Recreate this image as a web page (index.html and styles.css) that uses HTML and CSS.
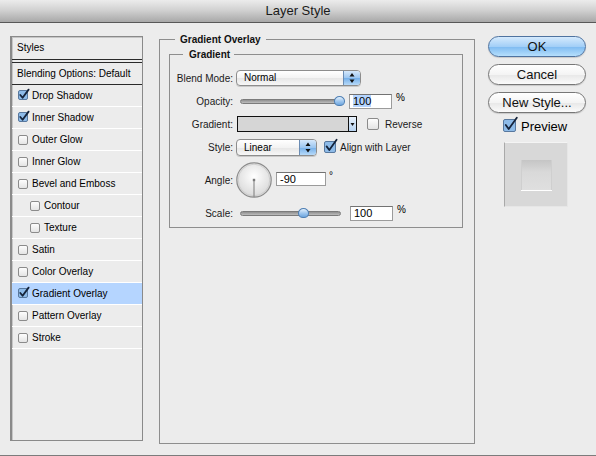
FILE: index.html
```html
<!DOCTYPE html>
<html lang="en">
<head>
    <meta charset="UTF-8">
    <title>Layer Style</title>
    <link rel="stylesheet" href="styles.css">
</head>
<body>
<div class="window">
    <div class="titlebar">Layer Style</div>

    <div class="dialog">
        <!-- left list -->
        <div class="styles">
            <div class="styles-head">Styles</div>
            <div class="styles-blend">Blending Options: Default</div>
            <ul class="fx-list">
                <li><span class="cb checked"><svg viewBox="0 0 12 12"><rect x="0.5" y="1.5" width="9" height="9" rx="1.5" class="box"/><path d="M2.3 6 L4.6 8.8 L10.6 0.6" class="tick"/></svg></span>Drop Shadow</li>
                <li><span class="cb checked"><svg viewBox="0 0 12 12"><rect x="0.5" y="1.5" width="9" height="9" rx="1.5" class="box"/><path d="M2.3 6 L4.6 8.8 L10.6 0.6" class="tick"/></svg></span>Inner Shadow</li>
                <li><span class="cb"></span>Outer Glow</li>
                <li><span class="cb"></span>Inner Glow</li>
                <li><span class="cb"></span>Bevel and Emboss</li>
                <li class="sub"><span class="cb"></span>Contour</li>
                <li class="sub"><span class="cb"></span>Texture</li>
                <li><span class="cb"></span>Satin</li>
                <li><span class="cb"></span>Color Overlay</li>
                <li class="active"><span class="cb checked"><svg viewBox="0 0 12 12"><rect x="0.5" y="1.5" width="9" height="9" rx="1.5" class="box"/><path d="M2.3 6 L4.6 8.8 L10.6 0.6" class="tick"/></svg></span>Gradient Overlay</li>
                <li><span class="cb"></span>Pattern Overlay</li>
                <li><span class="cb"></span>Stroke</li>
            </ul>
        </div>

        <!-- center panel -->
        <div class="main">
            <fieldset class="group outer">
                <legend>Gradient Overlay</legend>
                <fieldset class="group inner">
                    <legend>Gradient</legend>
                    <div class="form">
                        <label>Blend Mode:</label>
                        <div class="ctl">
                            <div class="popup wide"><span>Normal</span><span class="stepper"><svg viewBox="0 0 16 14"><path d="M5.5 5.5 L8 2 L10.5 5.5 Z M5.5 8.5 L8 12 L10.5 8.5 Z"/></svg></span></div>
                        </div>

                        <label>Opacity:</label>
                        <div class="ctl">
                            <div class="track op"><span class="thumb"></span></div>
                            <div class="field num"><span class="sel">100</span></div>
                            <span class="unit">%</span>
                        </div>

                        <label>Gradient:</label>
                        <div class="ctl">
                            <div class="grad"><span class="swatch"></span><span class="grad-arrow"><svg viewBox="0 0 7 14"><path d="M1.5 6 L5.5 6 L3.5 9 Z"/></svg></span></div>
                            <span class="cb lg gap-rev"></span>
                            <span class="opt">Reverse</span>
                        </div>

                        <label>Style:</label>
                        <div class="ctl">
                            <div class="popup short"><span>Linear</span><span class="stepper"><svg viewBox="0 0 16 15"><path d="M5.5 6 L8 2.5 L10.5 6 Z M5.5 9 L8 12.5 L10.5 9 Z"/></svg></span></div>
                            <span class="cb lg checked gap-align"><svg viewBox="0 0 14 14"><rect x="0.5" y="2.5" width="11" height="11" rx="1.5" class="box"/><path d="M2.6 7.4 L5.3 11 L12.6 0.8" class="tick"/></svg></span>
                            <span class="opt">Align with Layer</span>
                        </div>

                        <label>Angle:</label>
                        <div class="ctl">
                            <svg class="dial" viewBox="0 0 36 36">
                                <defs>
                                    <radialGradient id="dialfill" cx="50%" cy="40%" r="60%">
                                        <stop offset="0" stop-color="#ffffff"/>
                                        <stop offset="1" stop-color="#d8d8d8"/>
                                    </radialGradient>
                                </defs>
                                <circle cx="18" cy="18" r="17.2" fill="url(#dialfill)" stroke="#8c8c8c" stroke-width="1.2"/>
                                <circle cx="18" cy="18" r="15.8" fill="none" stroke="#c9c9c9" stroke-width="0.8"/>
                                <line x1="18" y1="18" x2="18" y2="35" stroke="#7a7a7a" stroke-width="1"/>
                                <rect x="16.8" y="16.8" width="2.4" height="2.4" fill="#7a7a7a"/>
                            </svg>
                            <div class="field angle">-90</div>
                            <span class="unit deg">°</span>
                        </div>

                        <label>Scale:</label>
                        <div class="ctl">
                            <div class="track sc"><span class="thumb"></span></div>
                            <div class="field num">100</div>
                            <span class="unit">%</span>
                        </div>
                    </div>
                </fieldset>
            </fieldset>
        </div>

        <!-- right column -->
        <div class="side">
            <button class="btn default">OK</button>
            <button class="btn">Cancel</button>
            <button class="btn">New Style...</button>
            <div class="preview-row">
                <span class="cb big checked"><svg viewBox="0 0 15 15"><rect x="0.5" y="2.5" width="12" height="12" rx="1.5" class="box"/><path d="M2.8 8 L5.7 12 L13.8 0.8" class="tick"/></svg></span>
                <span>Preview</span>
            </div>
            <div class="preview">
                <div class="preview-square"></div>
            </div>
        </div>
    </div>
</div>
</body>
</html>
```

FILE: styles.css
```css
*{
    box-sizing: border-box;
}
body{
    margin: 0;
    padding: 0;
    background-color: #ececec;
    font-family: "Liberation Sans", Arial, sans-serif;
    font-size: 10px;
    color: #000;
}
.window{
    width: 596px;
    height: 456px;
    border-bottom: 1px solid #7c7c7c;
    background-color: #ececec;
}
.titlebar{
    height: 23px;
    line-height: 22px;
    text-align: center;
    font-size: 13px;
    color: #1a1a1a;
    background: linear-gradient(#ececec, #d2d2d2 45%, #a8a8a8);
    border-bottom: 1px solid #585858;
}
.dialog{
    display: flex;
    align-items: flex-start;
    padding: 10px 0 0 10px;
}

/* styles list */
.styles{
    margin-top: 3px;
    width: 133px;
    height: 405px;
    border: 1px solid #8a8a8a;
    border-left-width: 2px;
    box-shadow: inset 1px 1px 0 #c6c6c6;
    background-color: #ececec;
}
.styles-head{
    height: 23px;
    line-height: 22px;
    padding-left: 5px;
    border-bottom: 1px solid #2a2a2a;
}
.styles-blend{
    margin-top: 2px;
    height: 23px;
    line-height: 21px;
    padding-left: 5px;
    border-top: 1px solid #2a2a2a;
    border-bottom: 1px solid #2a2a2a;
}
.fx-list{
    list-style: none;
    margin: 0;
    padding: 0;
}
.fx-list li{
    display: flex;
    align-items: center;
    height: 22px;
    padding-left: 6px;
    border-bottom: 1px solid #ffffff;
}
.fx-list li.sub{
    padding-left: 18px;
}
.fx-list li.active{
    background-color: #b5d5ff;
}

/* checkboxes */
.cb{
    display: inline-block;
    flex: none;
    width: 10px;
    height: 10px;
    margin-right: 4px;
    border: 1px solid #8b8b8b;
    border-radius: 2px;
    background: linear-gradient(#fdfdfd, #e4e4e4);
}
.cb.checked{
    border: none;
    background: none;
    width: 12px;
    height: 12px;
    margin-top: -2px;
    margin-right: 2px;
}
.cb svg{
    display: block;
    width: 100%;
    height: 100%;
    overflow: visible;
}
.cb .box{
    fill: #8ebbe8;
    stroke: #58789e;
    stroke-width: 1;
}
.cb .tick{
    fill: none;
    stroke: #15233a;
    stroke-width: 1.8;
    stroke-linecap: round;
    stroke-linejoin: round;
}
.cb.lg{
    width: 12px;
    height: 12px;
}
.cb.lg.checked{
    width: 14px;
    height: 14px;
    margin-top: -3px;
}

/* center groups */
.main{
    margin-left: 16px;
    width: 316px;
}
.group{
    margin: 0;
    min-inline-size: 0;
    border: 1px solid #8e8e8e;
}
.group legend{
    font-weight: bold;
    line-height: 13px;
    color: #111;
}
.outer{
    height: 411px;
    padding: 2px 11px 0 9px;
}
.outer > legend{
    margin-left: 6px;
    padding: 0 5px;
}
.inner{
    width: 294px;
    padding: 9px 0 6px 4px;
}
.inner > legend{
    margin-left: 9px;
    padding: 0 4px 0 6px;
}
.form{
    display: grid;
    grid-template-columns: 59px 1fr;
    grid-template-rows: 16px 16px 16px 16px 36px 16px;
    column-gap: 3px;
    row-gap: 7px;
}
.form label{
    text-align: right;
    align-self: center;
    white-space: nowrap;
    color: #1a1a1a;
}
.ctl{
    display: flex;
    align-items: center;
}

/* popup menus */
.popup{
    display: flex;
    height: 16px;
    border: 1px solid #8d8d8d;
    border-radius: 4px;
    background: linear-gradient(#ffffff, #f3f3f3 50%, #e6e6e6 51%, #f7f7f7);
    box-shadow: 0 1px 0 #c9c9c9;
    overflow: hidden;
}
.popup span:first-child{
    flex: 1;
    padding-left: 7px;
    line-height: 14px;
}
.popup.wide{
    width: 125px;
}
.popup.short{
    width: 81px;
    height: 17px;
}
.popup.short span:first-child{
    line-height: 15px;
}
.stepper{
    width: 17px;
    border-left: 1px solid #6b8cb3;
    background: linear-gradient(#d5e8fb, #9cc6f0 50%, #74aee8 51%, #b7daf9);
}
.stepper svg{
    display: block;
    width: 100%;
    height: 100%;
    fill: #111;
}

/* sliders */
.track{
    position: relative;
    height: 5px;
    margin-left: 4px;
    border-radius: 3px;
    border: 1px solid #7b7b7b;
    background: linear-gradient(#8f8f8f, #bdbdbd);
}
.track.op{
    width: 100px;
}
.track.sc{
    width: 101px;
}
.thumb{
    position: absolute;
    top: -4px;
    width: 11px;
    height: 10px;
    border-radius: 50% 50% 45% 45%;
    border: 1px solid #4e7fb4;
    background: linear-gradient(#e3f0fc, #9cc5ee 55%, #6ea6de);
}
.track.op .thumb{
    left: 93px;
}
.track.sc .thumb{
    left: 57px;
}

/* text fields */
.field{
    height: 15px;
    line-height: 13px;
    padding-left: 3px;
    background-color: #fff;
    border: 1px solid #9b9b9b;
    border-top-color: #727272;
    font-size: 11px;
}
.field.num{
    width: 43px;
    margin-left: 9px;
}
.field .sel{
    background-color: #b5d5ff;
}
.field.angle{
    width: 50px;
    height: 14px;
    margin-left: 4px;
    margin-top: -2px;
}
.unit{
    align-self: flex-start;
    margin-left: 4px;
    margin-top: -1px;
    font-size: 10px;
}
.unit.deg{
    align-self: center;
    margin-top: -10px;
    margin-left: 3px;
}

/* gradient picker */
.grad{
    display: flex;
    width: 120px;
    height: 16px;
    margin-left: 1px;
    border: 1px solid #111;
}
.grad .swatch{
    flex: 1;
    background-color: #d6d6d6;
}
.grad-arrow{
    width: 8px;
    border-left: 1px solid #111;
    background: linear-gradient(#e8f1fb, #b7d3f1);
}
.grad-arrow svg{
    display: block;
    width: 100%;
    height: 100%;
    fill: #111;
}
.gap-rev{
    margin-left: 10px;
    margin-right: 6px;
}
.gap-align{
    margin-left: 7px;
    margin-right: 5px;
}
.opt{
    color: #1a1a1a;
}
.dial{
    width: 36px;
    height: 36px;
}

/* right column */
.side{
    margin: 3px 0 0 13px;
    width: 98px;
    display: flex;
    flex-direction: column;
}
.btn{
    height: 21px;
    margin-bottom: 7px;
    padding: 0;
    font-family: "Liberation Sans", Arial, sans-serif;
    font-size: 13px;
    color: #111;
    border: 1px solid #777;
    border-radius: 11px;
    background: linear-gradient(#ffffff, #f4f4f4 50%, #e7e7e7 51%, #fbfbfb);
    box-shadow: 0 1px 1px rgba(0, 0, 0, 0.15);
}
.btn.default{
    border-color: #4f73a0;
    background: linear-gradient(#d5eafd, #a3cff7 50%, #7dbaf1 51%, #b6dffc);
}
.preview-row{
    display: flex;
    align-items: center;
    height: 18px;
    margin-top: -3px;
    padding-left: 15px;
    font-size: 13px;
}
.cb.big.checked{
    width: 15px;
    height: 15px;
    margin-right: 3px;
    margin-top: -3px;
}
.preview{
    width: 64px;
    height: 65px;
    margin: 7px 0 0 16px;
    padding-top: 17px;
    background-color: #d8d8d8;
    border-left: 1px solid #a9a9a9;
    border-top: 1px solid #f4f4f4;
    border-right: 1px solid #e6e6e6;
    border-bottom: 1px solid #e6e6e6;
}
.preview-square{
    width: 31px;
    height: 31px;
    margin-left: 16px;
    background: linear-gradient(#c5c5c5, #d9d9d9 40%, #dfdfdf);
    border-bottom: 1px solid #ffffff;
    box-shadow: inset 1px 0 0 #cfcfcf, inset -1px 0 0 #cfcfcf;
}
```
